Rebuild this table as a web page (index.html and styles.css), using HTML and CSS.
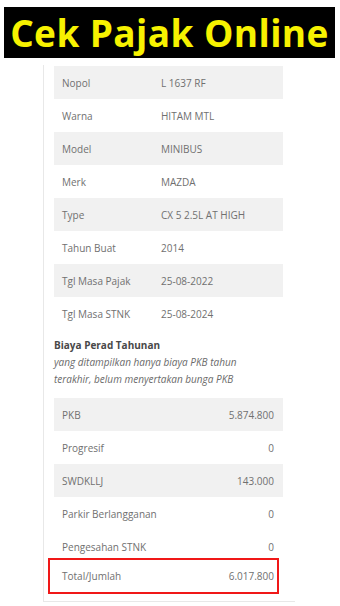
FILE: index.html
```html
<!DOCTYPE html>
<html>
<head>
<meta charset="utf-8">
<link rel="stylesheet" href="styles.css">
</head>
<body>
<div class="banner">Cek Pajak Online</div>
<div class="card">
  <div class="rows">
    <div class="row shade"><span class="label">Nopol</span><span class="val">L 1637 RF</span></div>
    <div class="row"><span class="label">Warna</span><span class="val">HITAM MTL</span></div>
    <div class="row shade"><span class="label">Model</span><span class="val">MINIBUS</span></div>
    <div class="row"><span class="label">Merk</span><span class="val">MAZDA</span></div>
    <div class="row shade"><span class="label">Type</span><span class="val">CX 5 2.5L AT HIGH</span></div>
    <div class="row"><span class="label">Tahun Buat</span><span class="val">2014</span></div>
    <div class="row shade"><span class="label">Tgl Masa Pajak</span><span class="val">25-08-2022</span></div>
    <div class="row"><span class="label">Tgl Masa STNK</span><span class="val">25-08-2024</span></div>
  </div>
  <div class="note">
    <div class="note-title">Biaya Perad Tahunan</div>
    <div class="note-text">yang ditampilkan hanya biaya PKB tahun terakhir, belum menyertakan bunga PKB</div>
  </div>
  <div class="rows">
    <div class="row money shade"><span class="label">PKB</span><span class="num">5.874.800</span></div>
    <div class="row money"><span class="label">Progresif</span><span class="num">0</span></div>
    <div class="row money shade"><span class="label">SWDKLLJ</span><span class="num">143.000</span></div>
    <div class="row money"><span class="label">Parkir Berlangganan</span><span class="num">0</span></div>
    <div class="row money"><span class="label">Pengesahan STNK</span><span class="num">0</span></div>
  </div>
  <div class="total-box">
    <div class="row money total"><span class="label">Total/Jumlah</span><span class="num">6.017.800</span></div>
  </div>
</div>
</body>
</html>
```
FILE: styles.css
```css
html, body {
  margin: 0;
  padding: 0;
  background: #ffffff;
}
body {
  width: 340px;
  height: 606px;
  overflow: hidden;
  font-family: "Open Sans", "Noto Sans", sans-serif;
}
.banner {
  margin: 7px 5px 0 4px;
  height: 51px;
  background: #000000;
  color: #f7f200;
  font-weight: 700;
  font-size: 37px;
  line-height: 51px;
  text-align: center;
  letter-spacing: 0.4px;
  white-space: nowrap;
}
.card {
  margin: 7px 0 0 43px;
  width: 241px;
  border-left: 1px solid #e8e8e8;
  border-bottom: 1px solid #e8e8e8;
  padding: 1px 0 7px 10px;
}
.rows {
  display: flex;
  flex-direction: column;
}
.row {
  display: flex;
  align-items: center;
  height: 33px;
  width: 229px;
  box-sizing: border-box;
  padding: 0 9px 0 8px;
  font-size: 10px;
  color: #707070;
}
.row.shade {
  background: #f1f1f1;
}
.label {
  width: 99px;
  flex-shrink: 0;
}
.money .label {
  flex: 1;
  width: auto;
}
.num {
  text-align: right;
}
.note {
  padding: 7px 0 10px 0;
  font-size: 10px;
  line-height: 17px;
}
.note-title {
  font-weight: 700;
  color: #484848;
}
.note-text {
  font-style: italic;
  color: #6a6a6a;
  width: 215px;
}
.total-box {
  margin: -5px 0 0 -6px;
  width: 231px;
  height: 36px;
  box-sizing: border-box;
  border: 2px solid #f01818;
  display: flex;
  align-items: center;
}
.total-box .row {
  width: 100%;
  padding: 0 3px 0 12px;
  height: 32px;
}
```
